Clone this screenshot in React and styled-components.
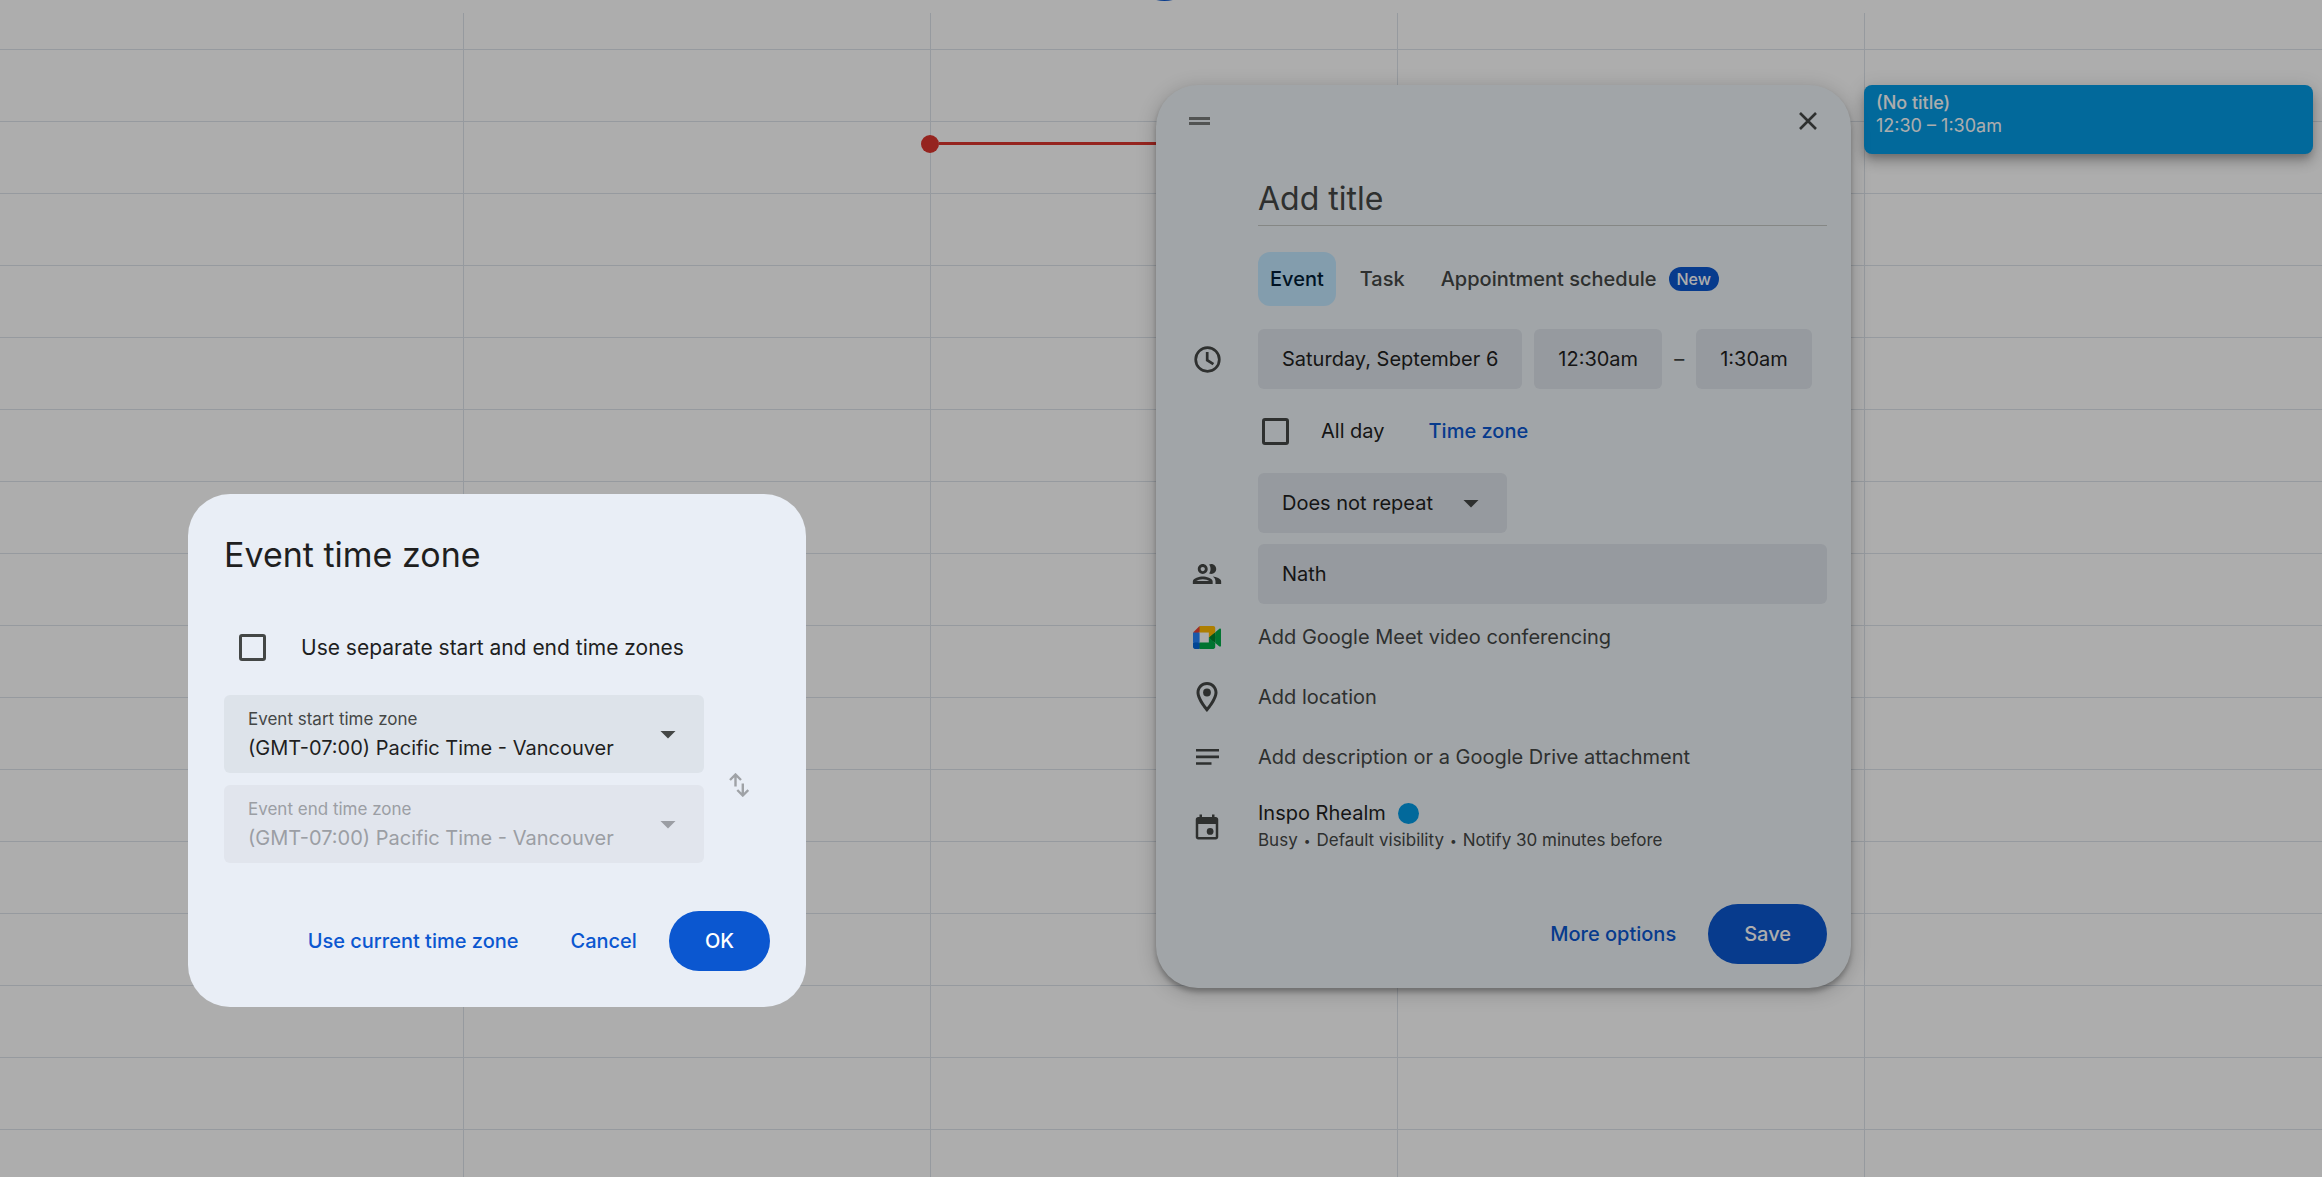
import React from "react";
import styled, { createGlobalStyle, css } from "styled-components";

const GlobalStyle = createGlobalStyle`
  *, *::before, *::after { box-sizing: border-box; }
  body { margin: 0; background: #fff; }
  body, button, input, select { font-family: Inter, "Liberation Sans", sans-serif; }
  button, input, select { margin: 0; padding: 0; border: 0; background: none; color: inherit; }
`;

const ink = "#1f1f1f";
const muted = "#444746";
const blue = "#0b57d0";
const line = "#dde3ea";

/* ---------- calendar ---------- */

const Calendar = styled.main`
  display: flex;
  flex-direction: column;
  min-height: 100vh;
  overflow: hidden;
`;

const DayHeaders = styled.header`
  display: grid;
  grid-template-columns: 464fr 467fr 467fr 467fr 457fr;
  height: 13px;
`;

const Today = styled.span`
  grid-column: 3;
  justify-self: center;
  width: 69px;
  height: 69px;
  margin-top: -68px;
  border-radius: 50%;
  background: ${blue};
`;

const Days = styled.div`
  flex: 1;
  display: grid;
  grid-template-columns: 464fr 467fr 467fr 467fr 457fr;
  background: repeating-linear-gradient(
    to bottom,
    transparent 0 36px,
    ${line} 36px 37px,
    transparent 37px 72px
  );
`;

const Day = styled.section`
  position: relative;
  border-right: 1px solid ${line};
  &:last-child { border-right: 0; }
`;

const NowLine = styled.div`
  position: absolute;
  top: 122px;
  left: -10px;
  right: 0;
  display: flex;
  align-items: center;
  &::before {
    content: "";
    width: 18px;
    height: 18px;
    border-radius: 50%;
    background: #dc362e;
  }
  &::after {
    content: "";
    flex: 1;
    height: 3px;
    margin-bottom: 1px;
    background: #dc362e;
  }
`;

const EventCard = styled.button`
  position: absolute;
  top: 72px;
  left: -1px;
  right: 9px;
  height: 69px;
  display: flex;
  flex-direction: column;
  justify-content: flex-start;
  padding: 6px 12px;
  border-radius: 8px;
  background: #039be5;
  color: #fff;
  font-size: 18px;
  line-height: 23px;
  text-align: left;
  box-shadow: 0 8px 12px 1px rgba(0, 0, 0, 0.14), 0 3px 18px 2px rgba(0, 0, 0, 0.12),
    0 6px 7px -3px rgba(0, 0, 0, 0.2);
`;

const EventName = styled.strong`
  font-weight: 500;
`;

/* ---------- shared controls ---------- */

const TextButton = styled.button`
  height: 60px;
  padding: 0 20px;
  border-radius: 30px;
  color: ${blue};
  font-size: 20px;
  font-weight: 500;
`;

const FilledButton = styled(TextButton)`
  padding: 0 36px;
  background: ${blue};
  color: #fff;
`;

const Actions = styled.footer`
  display: flex;
  justify-content: flex-end;
  gap: 12px;
`;

const IconButton = styled.button`
  display: grid;
  place-items: center;
  width: 38px;
  height: 38px;
  color: ${(p) => p.$color || muted};
`;

const CheckLabel = styled.label`
  display: flex;
  align-items: center;
  gap: ${(p) => p.$gap};
  height: 60px;
  padding-left: ${(p) => p.$inset};
  color: ${ink};
  font-size: ${(p) => p.$size};
`;

const Checkbox = styled.input.attrs({ type: "checkbox" })`
  appearance: none;
  width: 27px;
  height: 27px;
  border: 3px solid ${muted};
  border-radius: 3px;
  &:checked { background: ${muted}; }
`;

const SelectBox = styled.div`
  display: grid;
  align-items: center;
  width: ${(p) => p.$width};
  border-radius: 6px;
  background: ${line};
  color: ${ink};
  > * { grid-area: 1 / 1; }
  ${(p) =>
    p.$disabled &&
    css`
      background: #e1e5ed;
      color: #9b9ea4;
    `}
`;

const Select = styled.select`
  appearance: none;
  width: 100%;
  height: ${(p) => (p.$labelled ? "78px" : "60px")};
  padding: ${(p) => (p.$labelled ? "28px 54px 0 24px" : "0 54px 0 24px")};
  border-radius: 6px;
  font-size: 20px;
  &:disabled { color: inherit; opacity: 1; }
`;

const SelectLabel = styled.label`
  align-self: start;
  padding: 13px 24px 0;
  color: ${(p) => (p.$disabled ? "inherit" : muted)};
  font-size: 17px;
  line-height: 22px;
  pointer-events: none;
`;

const Caret = styled.svg.attrs({ viewBox: "0 0 24 24", width: 36, height: 36, "aria-hidden": true })`
  justify-self: end;
  margin-right: 18px;
  fill: ${(p) => (p.$disabled ? "currentColor" : muted)};
  pointer-events: none;
`;

/* ---------- event editor ---------- */

const Editor = styled.section`
  position: absolute;
  top: 85px;
  left: 1156px;
  display: flex;
  flex-direction: column;
  width: 695px;
  padding-bottom: 24px;
  border-radius: 42px;
  background: #eef4f8;
  color: ${muted};
  font-size: 20px;
  box-shadow: 0 4px 5px rgba(0, 0, 0, 0.26), 0 4px 18px 3px rgba(0, 0, 0, 0.16);
  ${Actions} { padding: 37px 24px 0; }
`;

const EditorBar = styled.header`
  display: flex;
  align-items: center;
  justify-content: space-between;
  height: 72px;
  padding: 0 24px;
`;

const Row = styled.div`
  display: grid;
  grid-template-columns: 102px 1fr;
  align-items: center;
  min-height: 60px;
  margin-top: ${(p) => p.$gap || "0"};
  padding-right: 24px;
  > svg { justify-self: center; }
  > :not(svg) { grid-column: 2; }
`;

const TitleInput = styled.input`
  width: 100%;
  height: 53px;
  border-bottom: 1px solid #c4c7c5;
  font-size: 32px;
  outline: 0;
  &::placeholder { color: ${muted}; opacity: 1; }
`;

const Tabs = styled.div`
  display: flex;
  gap: 12px;
`;

const Tab = styled.button`
  display: flex;
  align-items: center;
  gap: 12px;
  height: 54px;
  padding: 0 12px;
  border-radius: 12px;
  font-size: 20px;
  font-weight: 500;
  ${(p) =>
    p.$active &&
    css`
      background: #c2e7ff;
      color: #001d35;
    `}
`;

const Badge = styled.span`
  padding: 0 8px;
  border-radius: 12px;
  background: ${blue};
  color: #fff;
  font-size: 16px;
  line-height: 24px;
`;

const Times = styled.div`
  display: flex;
  align-items: center;
  gap: 12px;
`;

const Chip = styled.button`
  height: 60px;
  padding: 0 24px;
  border-radius: 6px;
  background: ${line};
  color: ${ink};
  font-size: 20px;
`;

const AllDay = styled.div`
  display: flex;
  align-items: center;
  gap: 24px;
  height: 84px;
`;

const GuestInput = styled.input`
  width: 100%;
  height: 60px;
  padding: 0 24px;
  border-radius: 6px;
  background: ${line};
  color: ${ink};
  font-size: 20px;
`;

const RowButton = styled.button`
  height: 60px;
  font-size: 20px;
  text-align: left;
`;

const CalendarButton = styled.button`
  display: flex;
  flex-direction: column;
  justify-content: center;
  height: 80px;
  font-size: 17px;
  line-height: 27px;
  text-align: left;
`;

const Owner = styled.span`
  display: flex;
  align-items: center;
  gap: 12px;
  color: ${ink};
  font-size: 20px;
`;

const Dot = styled.i`
  width: 21px;
  height: 21px;
  border-radius: 50%;
  background: #039be5;
`;

const Facts = styled.span`
  display: flex;
  gap: 6px;
`;

const Bullet = styled.span`
  font-size: 12px;
`;

/* ---------- time zone dialog ---------- */

const Scrim = styled.div`
  position: fixed;
  inset: 0;
  background: rgba(0, 0, 0, 0.32);
`;

const Dialog = styled.section`
  position: absolute;
  top: 494px;
  left: 188px;
  display: flex;
  flex-direction: column;
  width: 618px;
  padding: 36px;
  border-radius: 42px;
  background: #e9eef6;
`;

const DialogTitle = styled.h2`
  margin: 0 0 37px;
  color: ${ink};
  font-size: 34px;
  font-weight: 400;
  line-height: 50px;
`;

const Zones = styled.div`
  display: flex;
  align-items: center;
  gap: 16px;
  margin: 18px 0 48px;
  > ${IconButton} { margin-top: 12px; }
`;

const ZoneFields = styled.div`
  display: grid;
  gap: 12px;
`;

function DownCaret({ disabled }) {
  return (
    <Caret $disabled={disabled}>
      <path d="M7 10l5 5 5-5z" />
    </Caret>
  );
}

function ZoneSelect({ id, label, disabled }) {
  return (
    <SelectBox $width="480px" $disabled={disabled}>
      <Select id={id} $labelled disabled={disabled}>
        <option>(GMT-07:00) Pacific Time - Vancouver</option>
      </Select>
      <SelectLabel htmlFor={id} $disabled={disabled}>{label}</SelectLabel>
      <DownCaret disabled={disabled} />
    </SelectBox>
  );
}

function MeetLogo() {
  return (
    <svg width="28" height="23" viewBox="0 0 87.5 72" aria-hidden="true">
      <path fill="#fff" d="M20 20h30v32H20z" />
      <path fill="#00832d" d="M49.5 36l8.53 9.75 11.47 7.33 2-17.02-2-16.64-11.69 6.44z" />
      <path fill="#0066da" d="M0 51.5V66c0 3.315 2.685 6 6 6h14.5l3-10.96-3-9.54-9.95-3z" />
      <path fill="#e94235" d="M20.5 0L0 20.5l10.55 3 9.95-3 2.95-9.41z" />
      <path fill="#2684fc" d="M20.5 20.5H0v31h20.5z" />
      <path fill="#00ac47" d="M82.6 8.68L69.5 19.42v33.66l13.16 10.79c1.97 1.54 4.85.135 4.85-2.37V11c0-2.535-2.945-3.925-4.91-2.32zM49.5 36v15.5h-29V72h43c3.315 0 6-2.685 6-6V53.08z" />
      <path fill="#ffba00" d="M63.5 0h-43v20.5h29V36l20-16.57V6c0-3.315-2.685-6-6-6z" />
    </svg>
  );
}

export default function App() {
  return (
    <>
      <GlobalStyle />
      <Calendar>
        <DayHeaders>
          <Today />
        </DayHeaders>
        <Days>
          <Day />
          <Day />
          <Day>
            <NowLine />
          </Day>
          <Day />
          <Day>
            <EventCard>
              <EventName>(No title)</EventName>
              <span>12:30 – 1:30am</span>
            </EventCard>
          </Day>
        </Days>
      </Calendar>

      <Editor aria-label="New event">
        <EditorBar>
          <IconButton aria-label="Move" $color="#7a7d7b">
            <svg width="21" height="8" viewBox="0 0 21 8" fill="currentColor">
              <path d="M0 0h21v3H0zM0 5h21v3H0z" />
            </svg>
          </IconButton>
          <IconButton aria-label="Close">
            <svg width="18" height="18" viewBox="0 0 18 18" stroke="currentColor" strokeWidth="2.6">
              <path d="M1 1l16 16M17 1L1 17" />
            </svg>
          </IconButton>
        </EditorBar>

        <Row $gap="12px">
          <TitleInput aria-label="Title" placeholder="Add title" />
        </Row>

        <Row $gap="20px">
          <Tabs role="tablist">
            <Tab role="tab" aria-selected="true" $active>Event</Tab>
            <Tab role="tab">Task</Tab>
            <Tab role="tab">
              Appointment schedule <Badge>New</Badge>
            </Tab>
          </Tabs>
        </Row>

        <Row $gap="20px">
          <svg width="27" height="27" viewBox="0 0 27 27" fill="none" stroke="currentColor" strokeWidth="2.7">
            <circle cx="13.5" cy="13.5" r="11.8" />
            <path d="M13.2 6v8.2l6.2 4" />
          </svg>
          <Times>
            <Chip>Saturday, September 6</Chip>
            <Chip>12:30am</Chip>
            <span>–</span>
            <Chip>1:30am</Chip>
          </Times>
        </Row>

        <Row>
          <AllDay>
            <CheckLabel $gap="32px" $inset="4px" $size="20px">
              <Checkbox />
              All day
            </CheckLabel>
            <TextButton>Time zone</TextButton>
          </AllDay>
        </Row>

        <Row>
          <SelectBox $width="249px">
            <Select aria-label="Repeat">
              <option>Does not repeat</option>
            </Select>
            <DownCaret />
          </SelectBox>
        </Row>

        <Row $gap="11px">
          <svg width="34" height="34" viewBox="0 0 24 24" fill="currentColor">
            <path d="M9 13.75c-2.34 0-7 1.17-7 3.5V19h14v-1.75c0-2.33-4.66-3.5-7-3.5zM4.34 17c.84-.58 2.87-1.25 4.66-1.25s3.82.67 4.66 1.25H4.34zM9 12c1.93 0 3.5-1.57 3.5-3.5S10.93 5 9 5 5.5 6.57 5.5 8.5 7.07 12 9 12zm0-5c.83 0 1.5.67 1.5 1.5S9.83 10 9 10s-1.5-.67-1.5-1.5S8.17 7 9 7zm7.04 6.81c1.16.84 1.96 1.96 1.96 3.44V19h4v-1.75c0-2.02-3.5-3.17-5.96-3.44zM15 12c1.93 0 3.5-1.57 3.5-3.5S16.93 5 15 5c-.54 0-1.04.13-1.5.35.63.89 1 1.98 1 3.15s-.37 2.26-1 3.15c.46.22.96.35 1.5.35z" />
          </svg>
          <GuestInput aria-label="Guests" defaultValue="Nath" />
        </Row>

        <Row $gap="3px">
          <MeetLogo />
          <RowButton>Add Google Meet video conferencing</RowButton>
        </Row>

        <Row>
          <svg width="36" height="36" viewBox="0 0 24 24" fill="currentColor">
            <path d="M12 2C8.13 2 5 5.13 5 9c0 5.25 7 13 7 13s7-7.75 7-13c0-3.87-3.13-7-7-7zM7 9c0-2.76 2.24-5 5-5s5 2.24 5 5c0 2.88-2.88 7.19-5 9.88C9.92 16.21 7 11.85 7 9z" />
            <circle cx="12" cy="9" r="2.6" />
          </svg>
          <RowButton>Add location</RowButton>
        </Row>

        <Row>
          <svg width="23" height="16" viewBox="0 0 23 16" fill="currentColor">
            <path d="M0 0h23v2.6H0zM0 6.6h23v2.6H0zM0 13.2h15.5v2.6H0z" />
          </svg>
          <RowButton>Add description or a Google Drive attachment</RowButton>
        </Row>

        <Row>
          <svg width="30" height="30" viewBox="0 0 24 24" fill="currentColor">
            <path fillRule="evenodd" d="M16 2v2H8V2H6v2H5c-1.1 0-2 .9-2 2v14c0 1.1.9 2 2 2h14c1.1 0 2-.9 2-2V6c0-1.1-.9-2-2-2h-1V2h-2zM5 9.500h14V20H5V9.500z" />
            <circle cx="14.5" cy="15.5" r="2.7" />
          </svg>
          <CalendarButton>
            <Owner>
              Inspo Rhealm <Dot />
            </Owner>
            <Facts>
              Busy <Bullet>•</Bullet> Default visibility <Bullet>•</Bullet> Notify 30 minutes before
            </Facts>
          </CalendarButton>
        </Row>

        <Actions>
          <TextButton>More options</TextButton>
          <FilledButton>Save</FilledButton>
        </Actions>
      </Editor>

      <Scrim>
        <Dialog role="dialog" aria-labelledby="zone-title">
          <DialogTitle id="zone-title">Event time zone</DialogTitle>
          <CheckLabel $gap="35px" $inset="15px" $size="21px">
            <Checkbox />
            Use separate start and end time zones
          </CheckLabel>
          <Zones>
            <ZoneFields>
              <ZoneSelect id="start-zone" label="Event start time zone" />
              <ZoneSelect id="end-zone" label="Event end time zone" disabled />
            </ZoneFields>
            <IconButton aria-label="Swap time zones" disabled $color="#9fa2a6">
              <svg width="20" height="24" viewBox="0 0 20 24" fill="none" stroke="currentColor" strokeWidth="2.4">
                <path d="M6.5 13.5V2M1 7l5.5-5.5L12 7M13.8 10.5V22M8.3 17l5.5 5.5 5.5-5.5" />
              </svg>
            </IconButton>
          </Zones>
          <Actions>
            <TextButton>Use current time zone</TextButton>
            <TextButton>Cancel</TextButton>
            <FilledButton>OK</FilledButton>
          </Actions>
        </Dialog>
      </Scrim>
    </>
  );
}
